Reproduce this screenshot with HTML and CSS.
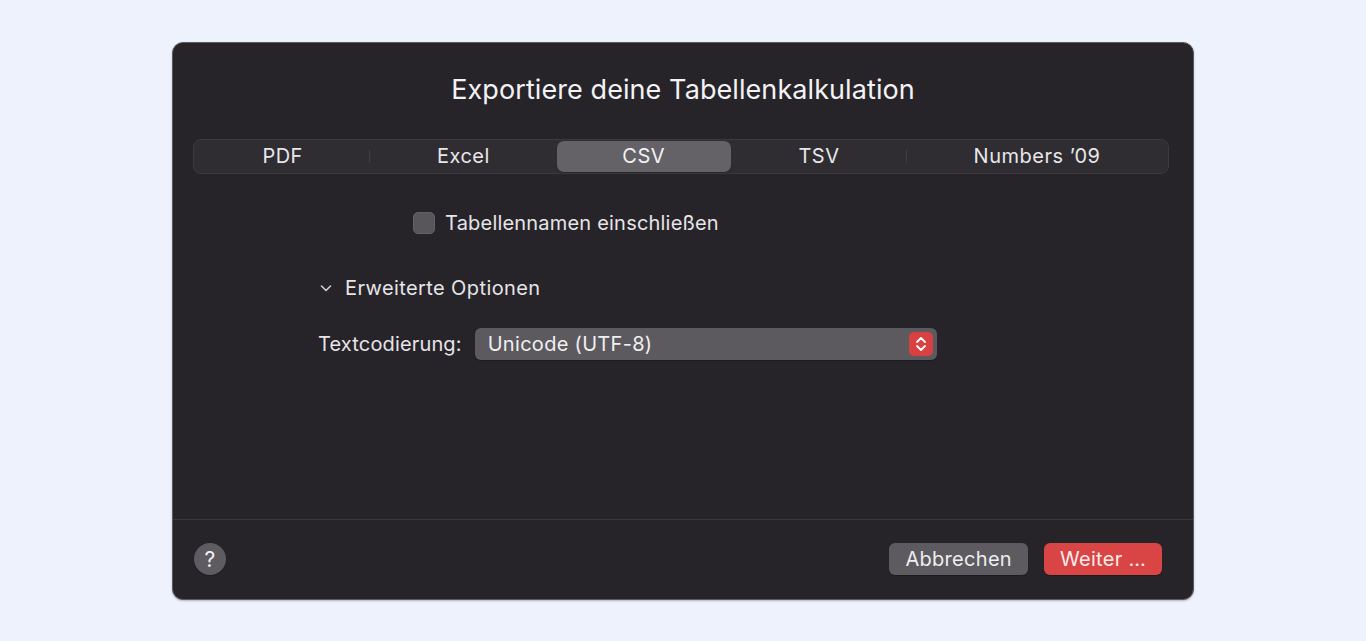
FILE: index.html
```html
<!DOCTYPE html>
<html lang="de">
<head>
  <meta charset="UTF-8" />
  <meta name="viewport" content="width=device-width, initial-scale=1.0"/>
  <title>Exportieren</title>
  <link rel="stylesheet" href="styles.css">
</head>
<body>
  <div class="dialog">
    <div class="title">Exportiere deine Tabellenkalkulation</div>

    <!-- Formatauswahl -->
    <div class="segmented">
      <div class="seg seg-pdf">PDF</div>
      <div class="seg seg-excel">Excel</div>
      <div class="seg seg-csv active">CSV</div>
      <div class="seg seg-tsv">TSV</div>
      <div class="seg seg-numbers">Numbers ’09</div>
    </div>

    <div class="options">
      <label class="check-row">
        <span class="checkbox"></span>
        <span>Tabellennamen einschließen</span>
      </label>

      <div class="disclosure">
        <svg class="chevron" width="14" height="10" viewBox="0 0 14 10">
          <path d="M2.5 3 L7 7.5 L11.5 3" fill="none" stroke="#cfcfd2" stroke-width="1.6" stroke-linecap="round" stroke-linejoin="round"/>
        </svg>
        <span>Erweiterte Optionen</span>
      </div>

      <div class="field-row">
        <span class="field-label">Textcodierung:</span>
        <div class="popup">
          <span>Unicode (UTF-8)</span>
          <span class="stepper">
            <svg width="16" height="20" viewBox="0 0 16 20">
              <path d="M4 8 L8 4 L12 8 M4 12 L8 16 L12 12" fill="none" stroke="#fff" stroke-width="1.8" stroke-linecap="round" stroke-linejoin="round"/>
            </svg>
          </span>
        </div>
      </div>
    </div>

    <div class="footer">
      <div class="help">?</div>
      <div class="buttons">
        <div class="btn">Abbrechen</div>
        <div class="btn btn-primary">Weiter …</div>
      </div>
    </div>
  </div>
</body>
</html>
```

FILE: styles.css
```css
* {
  margin: 0;
  padding: 0;
  box-sizing: border-box;
}

body {
  font-family: 'Inter', 'Roboto', sans-serif;
  background: #eef2fc;
  height: 100vh;
  display: flex;
  justify-content: center;
  align-items: center;
}

.dialog {
  width: 1022px;
  height: 558px;
  background: #262429;
  border: 1px solid #5c5b60;
  border-radius: 11px;
  display: flex;
  flex-direction: column;
  color: #e6e5e8;
  letter-spacing: 0.3px;
  box-shadow: 0 1px 2px rgba(0,0,0,0.25);
}

.title {
  margin-top: 30px;
  text-align: center;
  font-size: 27px;
  line-height: 34px;
  color: #f3f2f5;
  letter-spacing: 0.08px;
}

.segmented {
  margin: 32px 24px 0 20px;
  height: 35px;
  display: flex;
  background: #2f2d32;
  border: 1px solid #3c3a3f;
  border-radius: 8px;
  padding: 1px;
}

.seg {
  display: flex;
  justify-content: center;
  align-items: center;
  font-size: 20px;
  color: #e8e7ea;
  border-radius: 7px;
  position: relative;
  letter-spacing: 0.5px;
}

.seg-pdf { flex: 176; }
.seg-excel { flex: 187; }
.seg-csv { flex: 175; }
.seg-tsv { flex: 177; }
.seg-numbers { flex: 261; }

/* Trennlinien zwischen nicht gewählten Segmenten */
.seg-pdf::after,
.seg-tsv::after {
  content: "";
  position: absolute;
  right: 0;
  top: 9px;
  bottom: 9px;
  width: 1px;
  background: #403e43;
}

.seg.active {
  background: #646267;
  color: #f2f1f4;
  box-shadow: 0 1px 1px rgba(0,0,0,0.2);
}

.options {
  display: flex;
  flex-direction: column;
  padding-left: 145px;
}

.check-row {
  margin: 37px 0 0 95px;
  display: flex;
  align-items: center;
  gap: 10px;
  font-size: 20px;
  height: 24px;
  letter-spacing: 0.2px;
}

.checkbox {
  width: 22px;
  height: 22px;
  border-radius: 5px;
  background: #58565b;
  border: 1px solid #636166;
}

.disclosure {
  margin-top: 41px;
  display: flex;
  align-items: center;
  gap: 12px;
  font-size: 20px;
  height: 24px;
  padding-left: 1px;
  letter-spacing: 0.4px;
}

.field-row {
  margin-top: 28px;
  display: flex;
  align-items: center;
  gap: 13px;
  font-size: 20px;
  letter-spacing: 0.15px;
}

.popup {
  width: 462px;
  height: 32px;
  background: #5c5a5e;
  border-radius: 6px;
  display: flex;
  align-items: center;
  justify-content: space-between;
  padding: 0 4px 0 13px;
  color: #f0eff2;
  letter-spacing: 0.3px;
  box-shadow: 0 1px 1px rgba(0,0,0,0.25);
}

.stepper {
  width: 24px;
  height: 24px;
  border-radius: 5px;
  background: #d84142;
  display: flex;
  justify-content: center;
  align-items: center;
}

.footer {
  margin-top: auto;
  height: 80px;
  border-top: 1px solid #3a383d;
  display: flex;
  align-items: center;
  justify-content: space-between;
  padding: 0 31px 0 21px;
}

.help {
  width: 32px;
  height: 32px;
  border-radius: 50%;
  background: #5e5c61;
  display: flex;
  justify-content: center;
  align-items: center;
  font-size: 21px;
  color: #f2f1f4;
  box-shadow: 0 1px 1px rgba(0,0,0,0.25);
}

.buttons {
  display: flex;
  gap: 16px;
}

.btn {
  height: 32px;
  padding: 0 16px;
  border-radius: 6px;
  background: #5d5b5f;
  display: flex;
  align-items: center;
  font-size: 20px;
  color: #eeedf0;
  box-shadow: 0 1px 1px rgba(0,0,0,0.25);
}

.btn-primary {
  background: #d94445;
  color: #fbecec;
}
```
